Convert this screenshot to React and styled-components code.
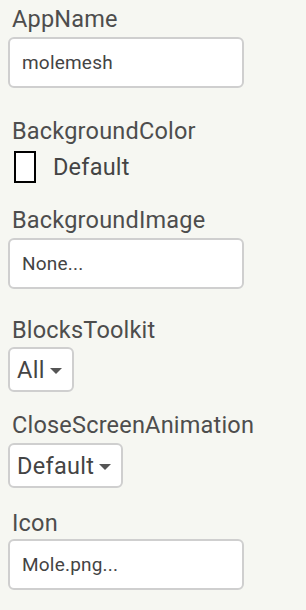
import React from "react";
import styled, { createGlobalStyle } from "styled-components";

const Global = createGlobalStyle`
  html, body { margin: 0; padding: 0; background: #f6f7f2; }
  body { font-family: Roboto, "Liberation Sans", Arial, sans-serif; color: #444; }
`;

const Panel = styled.div`
  display: flex;
  flex-direction: column;
  padding: 5px 0 0 8px;
  width: 306px;
  height: 610px;
  box-sizing: border-box;
  background: #f6f7f2;
`;

const Property = styled.div`
  display: flex;
  flex-direction: column;
  align-items: flex-start;
  margin-bottom: ${(p) => p.$after}px;
`;

const Label = styled.div`
  font-size: 23.5px;
  line-height: 28px;
  letter-spacing: 0.2px;
  color: #4d4d4d;
  padding-left: 4px;
  margin-bottom: ${(p) => p.$gap}px;
  white-space: nowrap;
`;

const TextBox = styled.div`
  box-sizing: border-box;
  width: 236px;
  height: 51px;
  border: 2px solid #cfcfcf;
  border-radius: 6px;
  background: #fff;
  display: flex;
  align-items: center;
  padding-left: 12px;
  font-size: 19px;
  letter-spacing: 0.2px;
  color: #444;
`;

const Select = styled.div`
  box-sizing: border-box;
  height: 45px;
  border: 2px solid #cfcfcf;
  border-radius: 6px;
  background: #fff;
  display: flex;
  align-items: center;
  gap: 5px;
  padding: 0 10px 0 7px;
  font-size: 23.5px;
  letter-spacing: 0.3px;
  color: #444;
`;

const Caret = styled.span`
  width: 0;
  height: 0;
  border-left: 6px solid transparent;
  border-right: 6px solid transparent;
  border-top: 6px solid #555;
  margin-top: 3px;
`;

const ColorRow = styled.div`
  display: flex;
  align-items: center;
  gap: 17px;
  padding-left: 6px;
  height: 32px;
  font-size: 23.5px;
  letter-spacing: 0.2px;
  color: #444;
`;

const Swatch = styled.span`
  box-sizing: border-box;
  width: 22px;
  height: 32px;
  border: 2px solid #000;
  background: #fff;
`;

export default function App() {
  return (
    <>
      <Global />
      <Panel>
        <Property $after={29}>
          <Label $gap={4}>AppName</Label>
          <TextBox>molemesh</TextBox>
        </Property>
        <Property $after={23}>
          <Label $gap={6}>BackgroundColor</Label>
          <ColorRow>
            <Swatch />
            Default
          </ColorRow>
        </Property>
        <Property $after={27}>
          <Label $gap={4}>BackgroundImage</Label>
          <TextBox>None...</TextBox>
        </Property>
        <Property $after={19}>
          <Label $gap={3}>BlocksToolkit</Label>
          <Select>
            All
            <Caret />
          </Select>
        </Property>
        <Property $after={21}>
          <Label $gap={4}>CloseScreenAnimation</Label>
          <Select>
            Default
            <Caret />
          </Select>
        </Property>
        <Property $after={0}>
          <Label $gap={2}>Icon</Label>
          <TextBox>Mole.png...</TextBox>
        </Property>
      </Panel>
    </>
  );
}
